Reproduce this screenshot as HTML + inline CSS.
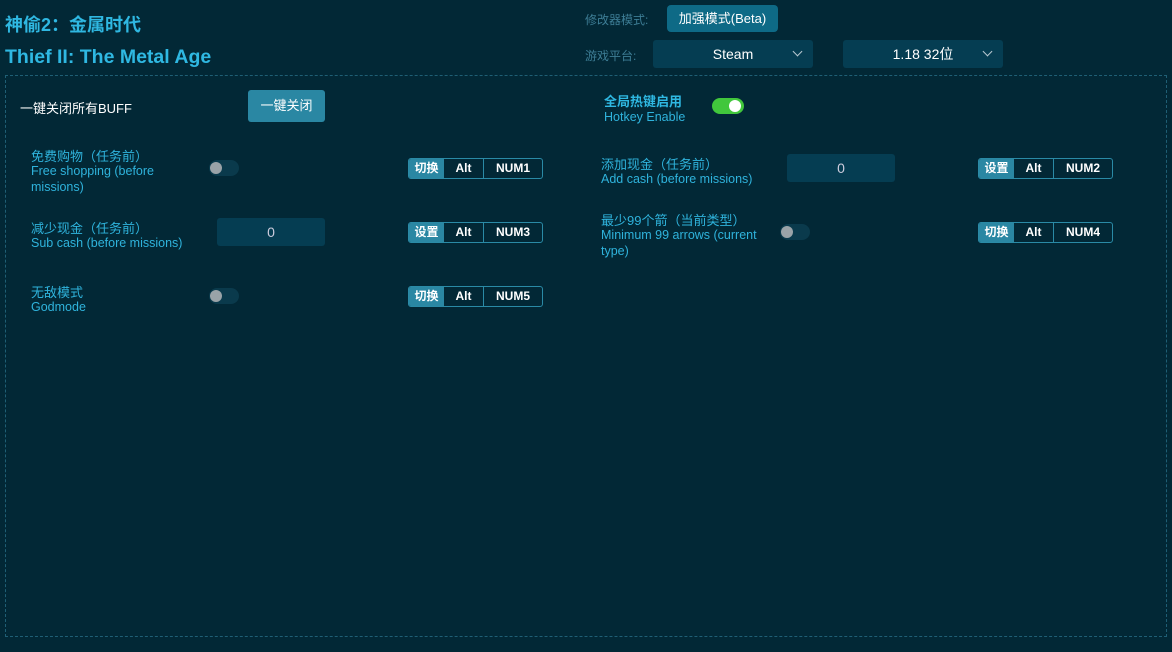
<!DOCTYPE html>
<html><head><meta charset="utf-8"><style>
*{margin:0;padding:0;box-sizing:border-box}
body{width:1172px;height:652px;background:#022836;font-family:"Liberation Sans","Noto Sans CJK SC",sans-serif;position:relative;overflow:hidden;color:#2fb3dc}
.a{position:absolute;white-space:nowrap}
.t{font-weight:bold;color:#2fb8e2}
.g{font-size:12px;color:#3d7d95}
.sel{background:#053d52;border-radius:3px;color:#fff;font-size:14px;text-align:center;line-height:28px}
.sel i{position:absolute;right:12px;top:8px;width:7px;height:7px;border-right:1.4px solid #b8c8d0;border-bottom:1.4px solid #b8c8d0;transform:rotate(45deg)}
.lb{font-size:13px;color:#2fb3dc}
.sb{font-size:12.5px;color:#2fb3dc;line-height:16px}
.tg{width:30px;height:16px;border-radius:8px;background:#0a3a4c}
.tg:after{content:"";position:absolute;left:1px;top:2px;width:12px;height:12px;border-radius:6px;background:#9aa3a8}
.hk{height:21px;border:1px solid #2a8aa6;border-radius:3px;display:flex;font-size:12px;color:#fff;font-weight:bold;overflow:hidden;width:135px}
.hk span{line-height:19px;text-align:center}
.hk .k{background:#2a87a3;width:35px}
.hk .b{width:40px;border-right:1px solid #2a8aa6}
.hk .c{width:58px}
.in{background:#053d52;border-radius:3px;color:#ccd;font-size:14px;text-align:center;line-height:28px;width:108px;height:28px}
</style></head><body>
<div class="a t" style="left:5px;top:11px;font-size:18px">神偷2：金属时代</div>
<div class="a t" style="left:5px;top:46px;font-size:19.5px">Thief II: The Metal Age</div>
<div class="a" style="left:5px;top:75px;width:1162px;height:562px;border:1px dashed #1f5f75"></div>
<div class="a g" style="left:585px;top:11px">修改器模式:</div>
<div class="a" style="left:667px;top:5px;width:111px;height:27px;background:#0e6a86;border-radius:4px;color:#fff;font-size:13px;text-align:center;line-height:27px">加强模式(Beta)</div>
<div class="a g" style="left:585px;top:47px">游戏平台:</div>
<div class="a sel" style="left:653px;top:40px;width:160px;height:28px">Steam<i></i></div>
<div class="a sel" style="left:843px;top:40px;width:160px;height:28px">1.18 32位<i></i></div>
<div class="a" style="left:20px;top:98px;font-size:13px;color:#fff">一键关闭所有BUFF</div>
<div class="a" style="left:248px;top:90px;width:77px;height:32px;background:#2a87a3;border-radius:3px;color:#fff;font-size:13px;text-align:center;line-height:32px">一键关闭</div>
<div class="a" style="left:604px;top:91px;font-size:13px;font-weight:bold;color:#2fb8e2">全局热键启用</div>
<div class="a sb" style="left:604px;top:109px">Hotkey Enable</div>
<div class="a" style="left:712px;top:98px;width:32px;height:16px;border-radius:8px;background:#41c73c"><div style="position:absolute;right:3px;top:2px;width:12px;height:12px;border-radius:6px;background:#fff"></div></div>

<div class="a lb" style="left:31px;top:146px">免费购物（任务前）</div>
<div class="a sb" style="left:31px;top:163px">Free shopping (before<br>missions)</div>
<div class="a tg" style="left:209px;top:160px"></div>
<div class="a hk" style="left:408px;top:158px"><span class="k">切换</span><span class="b">Alt</span><span class="c">NUM1</span></div>

<div class="a lb" style="left:31px;top:218px">减少现金（任务前）</div>
<div class="a sb" style="left:31px;top:235px">Sub cash (before missions)</div>
<div class="a in" style="left:217px;top:218px">0</div>
<div class="a hk" style="left:408px;top:222px"><span class="k">设置</span><span class="b">Alt</span><span class="c">NUM3</span></div>

<div class="a lb" style="left:31px;top:282px">无敌模式</div>
<div class="a sb" style="left:31px;top:299px">Godmode</div>
<div class="a tg" style="left:209px;top:288px"></div>
<div class="a hk" style="left:408px;top:286px"><span class="k">切换</span><span class="b">Alt</span><span class="c">NUM5</span></div>

<div class="a lb" style="left:601px;top:154px">添加现金（任务前）</div>
<div class="a sb" style="left:601px;top:171px">Add cash (before missions)</div>
<div class="a in" style="left:787px;top:154px">0</div>
<div class="a hk" style="left:978px;top:158px"><span class="k">设置</span><span class="b">Alt</span><span class="c">NUM2</span></div>

<div class="a lb" style="left:601px;top:210px">最少99个箭（当前类型）</div>
<div class="a sb" style="left:601px;top:227px">Minimum 99 arrows (current<br>type)</div>
<div class="a tg" style="left:780px;top:224px"></div>
<div class="a hk" style="left:978px;top:222px"><span class="k">切换</span><span class="b">Alt</span><span class="c">NUM4</span></div>
</body></html>
